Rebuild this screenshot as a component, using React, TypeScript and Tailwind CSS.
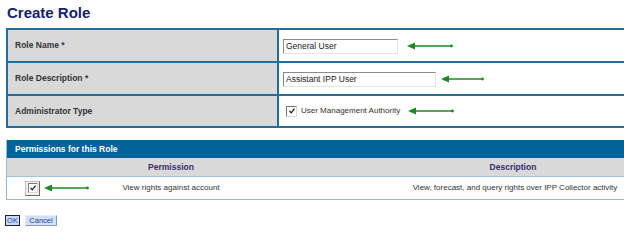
import type { ReactNode } from "react"

function Arrow({ width = 46 }: { width?: number }) {
  return (
    <svg width={width} height={8} viewBox={`0 0 ${width} 8`} className="shrink-0" aria-hidden>
      <line x1={5} y1={4} x2={width - 1.5} y2={4} stroke="#1d8a22" strokeWidth={1.6} />
      <polygon points="0,4 8,0.5 8,7.5" fill="#1d8a22" />
      <circle cx={width - 1.5} cy={4} r={1.4} fill="#1d8a22" />
    </svg>
  )
}

function Check({ size = 11 }: { size?: number }) {
  return (
    <span
      className="flex shrink-0 items-center justify-center border border-t-[#7a7a7a] border-l-[#7a7a7a] border-r-[#d8d8d8] border-b-[#d8d8d8] bg-white"
      style={{ width: size, height: size }}
    >
      <svg width={6} height={6} viewBox="0 0 7 7" aria-hidden>
        <path d="M0.6 3.4 L2.6 5.6 L6.4 0.8" fill="none" stroke="#111" strokeWidth={1.4} />
      </svg>
    </span>
  )
}

function TextBox({ value, width }: { value: string; width: number }) {
  return (
    <div
      className="flex h-[15px] items-center border border-t-[#8a8a8a] border-l-[#8a8a8a] border-r-[#e4e4e4] border-b-[#e4e4e4] bg-white pl-[2px] text-[8.5px] text-[#222]"
      style={{ width }}
    >
      {value}
    </div>
  )
}

function FormRow({ label, children, last }: { label: string; children: ReactNode; last?: boolean }) {
  return (
    <div className={`flex ${last ? "h-[30px]" : "h-[33px] border-b-2 border-[#246c9b]"}`}>
      <div className="flex w-[271px] shrink-0 items-center border-r-2 border-[#246c9b] bg-[#d9d9d9] pl-[7px] text-[8.5px] font-bold text-[#333]">
        {label}
      </div>
      <div className="flex flex-1 items-center pl-[4px]">{children}</div>
    </div>
  )
}

export default function App() {
  return (
    <div className="h-[229px] w-[624px] overflow-hidden bg-white font-['Liberation_Sans',Arial,sans-serif]">
      <h1 className="pl-[7px] pt-[3px] text-[15px] font-bold leading-[20px] text-[#16216c]">Create Role</h1>

      <div className="ml-[6px] mt-[5px] w-[760px] border-2 border-[#246c9b]">
        <FormRow label="Role Name *">
          <div className="mt-[1px] flex items-center gap-[9px]">
            <TextBox value="General User" width={115} />
            <Arrow />
          </div>
        </FormRow>
        <FormRow label="Role Description *">
          <div className="mt-[1px] flex items-center gap-[5px]">
            <TextBox value="Assistant IPP User" width={153} />
            <Arrow width={43} />
          </div>
        </FormRow>
        <FormRow label="Administrator Type" last>
          <div className="flex items-center pl-[3px]">
            <Check />
            <span className="ml-[4px] text-[8px] text-[#333]">User Management Authority</span>
            <span className="ml-[8px] flex">
              <Arrow />
            </span>
          </div>
        </FormRow>
      </div>

      <div className="ml-[6px] mt-[12px] w-[760px] border-l border-[#9bb7d6]">
        <div className="flex h-[18px] items-center bg-[#03629a] pl-[8px] text-[8.5px] font-bold text-white">
          Permissions for this Role
        </div>
        <div className="grid h-[19px] grid-cols-[51px_226px_1fr] items-center border-b border-[#a7c0de] bg-[#d9d9d9] text-[8.5px] font-bold text-[#3a2b6e]">
          <span />
          <span className="text-center">Permission</span>
          <span className="pr-[24px] text-center">Description</span>
        </div>
        <div className="grid h-[23px] grid-cols-[51px_226px_1fr] items-center border-b border-[#9bb7d6] text-[8px] text-[#333]">
          <div className="relative flex h-full items-center">
            <span className="ml-[18px] flex h-[15px] w-[15px] items-center justify-center border border-t-[#bcbcbc] border-l-[#bcbcbc] border-r-[#6a6a6a] border-b-[#6a6a6a] bg-[#f2f2f2]">
              <Check size={10} />
            </span>
            <span className="absolute left-[37px] top-[7px] flex">
              <Arrow width={45} />
            </span>
          </div>
          <span className="text-center">View rights against account</span>
          <span className="pr-[20px] text-center">View, forecast, and query rights over IPP Collector activity</span>
        </div>
      </div>

      <div className="ml-[5px] mt-[15px] flex items-center gap-[5px]">
        <button className="flex h-[11px] w-[15px] items-center justify-center border border-[#222] bg-[#c9d8f4] text-[7.5px] leading-none text-[#1b3fa8]">
          OK
        </button>
        <button className="flex h-[11px] w-[32px] items-center justify-center border border-t-[#e8eefb] border-l-[#e8eefb] border-r-[#8a9bb8] border-b-[#8a9bb8] bg-[#d3dff6] text-[7.5px] leading-none text-[#1b3fa8]">
          Cancel
        </button>
      </div>
    </div>
  )
}
